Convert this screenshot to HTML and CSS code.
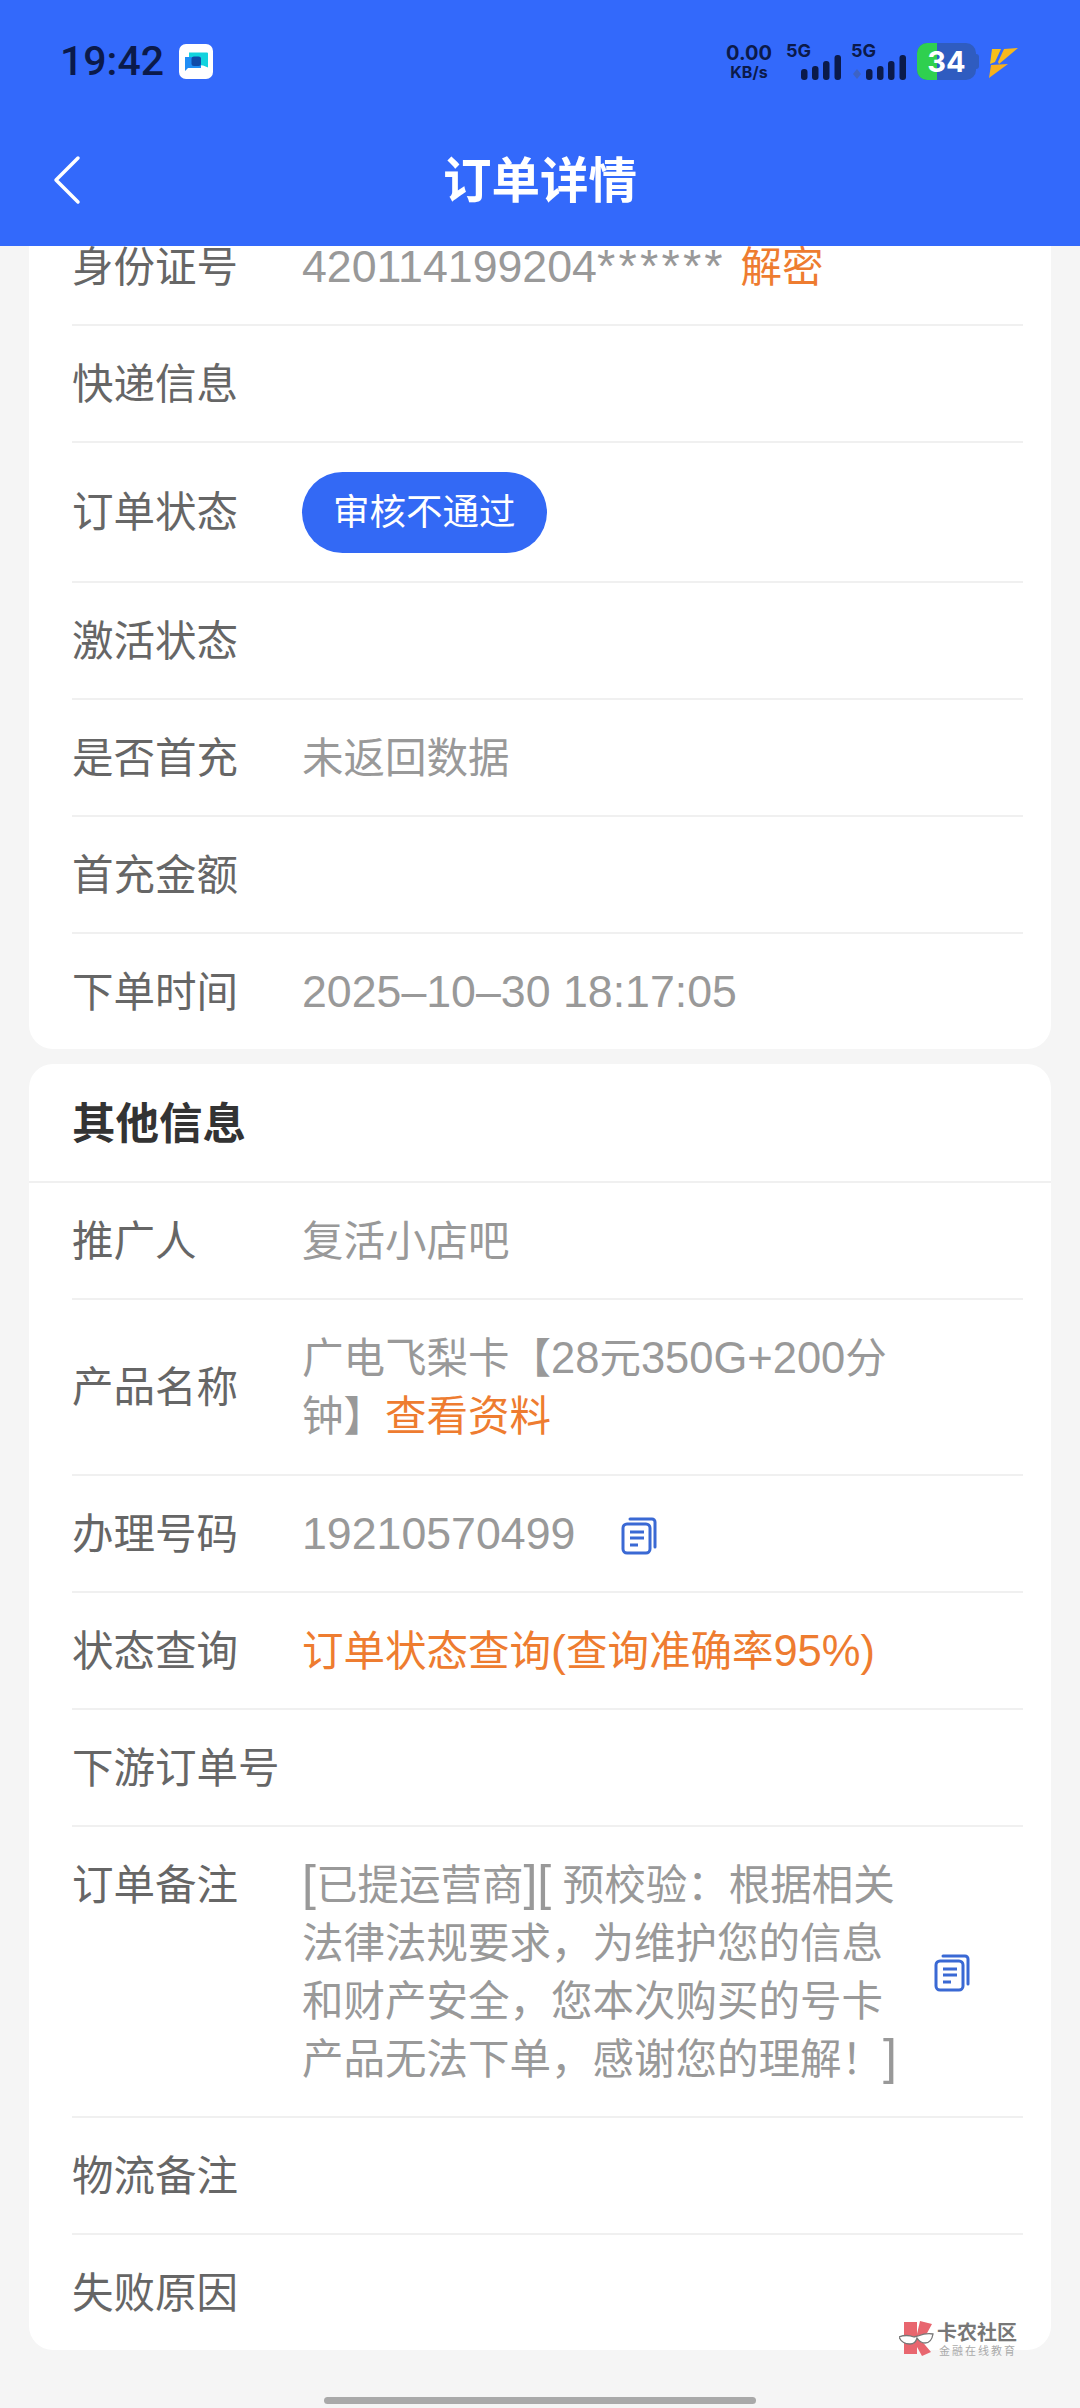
FILE: index.html
```html
<!DOCTYPE html>
<html lang="zh-CN">
<head>
<meta charset="utf-8">
<title>订单详情</title>
<link rel="stylesheet" href="styles.css">
</head>
<body>
<div class="screen">
  <header class="appbar">
    <div class="status">
      <div class="status-left">
        <span class="time">19:42</span>
        <svg class="app-icon" width="34" height="35" viewBox="0 0 34 35">
          <rect width="34" height="35" rx="7" fill="#fff"/>
          <path d="M10 8.500h18a1 1 0 0 1 1 1v14c-5-3-10-3-19-2z" fill="#12d3de"/>
          <path d="M6 13h15a1 1 0 0 1 1 1v10H9l-3 3z" fill="#1f8ef5"/>
          <rect x="12.500" y="12.500" width="9.500" height="9.500" rx="2.500" fill="#0f4aa8"/>
        </svg>
      </div>
      <div class="status-right">
        <div class="speed"><span class="speed-num">0.00</span><span class="speed-unit">KB/s</span></div>
        <div class="sig">
          <span class="sig-label">5G</span>
          <svg class="sig-bars" width="41" height="25" viewBox="0 0 41 25">
            <rect x="0" y="14" width="6.500" height="11" rx="3" fill="#0b1a4a"/>
            <rect x="11" y="11" width="6.500" height="14" rx="3" fill="#0b1a4a"/>
            <rect x="22" y="6" width="6.500" height="19" rx="3" fill="#0b1a4a"/>
            <rect x="33.500" y="0" width="6.500" height="25" rx="3" fill="#0b1a4a"/>
          </svg>
        </div>
        <div class="sig sig-second">
          <span class="sig-label">5G</span>
          <svg class="sig-bars" width="41" height="25" viewBox="0 0 41 25">
            <path class="sim-mark" d="M-9 14l-4 5 4 5 4-5z" fill="#3d63c4"/>
            <rect x="0" y="14" width="6.500" height="11" rx="3" fill="#0b1a4a"/>
            <rect x="11" y="11" width="6.500" height="14" rx="3" fill="#0b1a4a"/>
            <rect x="22" y="6" width="6.500" height="19" rx="3" fill="#0b1a4a"/>
            <rect x="33.500" y="0" width="6.500" height="25" rx="3" fill="#0b1a4a"/>
          </svg>
        </div>
        <div class="battery"><div class="battery-fill"></div><span class="battery-num">34</span></div>
        <div class="battery-cap"></div>
        <svg class="bolt" width="31" height="32" viewBox="0 0 31 32">
          <path d="M3 2h9L6 15l-5 2z" fill="#f7c01c"/>
          <path d="M15 2l14-1L10 17l-1-2z" fill="#f7b81c"/>
          <path d="M2 18l17-1L0 31z" fill="#f7b01c"/>
        </svg>
      </div>
    </div>
    <div class="navbar">
      <svg class="back" width="28" height="50" viewBox="0 0 28 50">
        <path d="M25 3L3 25l22 22" fill="none" stroke="#fff" stroke-width="3.500" stroke-linecap="round" stroke-linejoin="round"/>
      </svg>
      <h1 class="title">订单详情</h1>
    </div>
  </header>

  <main class="content">
    <section class="card card-first">
      <div class="row"><span class="label">身份证号</span><span class="value"><span class="num">420114199204</span><span class="stars">******</span> <span class="link">解密</span></span></div>
      <div class="row"><span class="label">快递信息</span></div>
      <div class="row row-pill"><span class="label">订单状态</span><span class="pill">审核不通过</span></div>
      <div class="row"><span class="label">激活状态</span></div>
      <div class="row"><span class="label">是否首充</span><span class="value">未返回数据</span></div>
      <div class="row"><span class="label">首充金额</span></div>
      <div class="row row-last"><span class="label">下单时间</span><span class="value"><span class="num">2025–10–30 18:17:05</span></span></div>
    </section>

    <section class="card">
      <h2 class="card-title">其他信息</h2>
      <div class="row"><span class="label">推广人</span><span class="value">复活小店吧</span></div>
      <div class="row row-center"><span class="label">产品名称</span><span class="value value-wrap">广电飞梨卡【<span class="num-sm">28</span>元<span class="num-sm">350G+200</span>分钟】<span class="link">查看资料</span></span></div>
      <div class="row">
        <span class="label">办理号码</span><span class="value"><span class="num">19210570499</span></span>
        <svg class="copy copy-inline" width="36" height="38" viewBox="0 0 36 38">
          <path d="M9 2h22a3 3 0 0 1 3 3v25" fill="none" stroke="#3a69d4" stroke-width="3" stroke-linecap="round"/>
          <rect x="2" y="7" width="27" height="29" rx="4" fill="none" stroke="#3a69d4" stroke-width="3"/>
          <path d="M9 15h14M9 21h14M9 28h8" fill="none" stroke="#3a69d4" stroke-width="3"/>
        </svg>
      </div>
      <div class="row"><span class="label">状态查询</span><span class="value link">订单状态查询<span class="num">(</span>查询准确率<span class="num-sm">95%)</span></span></div>
      <div class="row"><span class="label">下游订单号</span></div>
      <div class="row">
        <span class="label">订单备注</span>
        <span class="value value-note"><span class="br">[</span>已提运营商<span class="br">][</span> 预校验：根据相关法律法规要求，为维护您的信息和财产安全，您本次购买的号卡产品无法下单，感谢您的理解！<span class="br">]</span></span>
        <svg class="copy copy-note" width="36" height="38" viewBox="0 0 36 38">
          <path d="M9 2h22a3 3 0 0 1 3 3v25" fill="none" stroke="#3a69d4" stroke-width="3" stroke-linecap="round"/>
          <rect x="2" y="7" width="27" height="29" rx="4" fill="none" stroke="#3a69d4" stroke-width="3"/>
          <path d="M9 15h14M9 21h14M9 28h8" fill="none" stroke="#3a69d4" stroke-width="3"/>
        </svg>
      </div>
      <div class="row"><span class="label">物流备注</span></div>
      <div class="row row-last"><span class="label">失败原因</span></div>
    </section>
  </main>

  <div class="watermark">
    <svg class="wm-logo" width="36" height="36" viewBox="0 0 36 36">
      <path d="M5 1h13v12L21 0l12 3-6 11-6 4 11 13-9 4-5-9v7H5z" fill="#e8666f"/>
      <path d="M0 16c5-2 10-2 15 0l4-1c5-2 10-3 15-2-1 6-3 9-8 9-4 0-6-2-8-5-1 4-3 6-7 6-5 0-9-2-11-7z" fill="#fff" stroke="#777" stroke-width="1.300"/>
    </svg>
    <div class="wm-text"><span class="wm-main">卡农社区</span><span class="wm-sub">金融在线教育</span></div>
  </div>
  <div class="home-bar"></div>
</div>
</body>
</html>
```

FILE: styles.css
```css
* { box-sizing: border-box; }
html, body { margin: 0; padding: 0; }
body {
  width: 1080px;
  height: 2408px;
  overflow: hidden;
  background: #f5f5f5;
  font-family: "Liberation Sans", "Noto Sans CJK SC", sans-serif;
}
.screen {
  position: relative;
  width: 1080px;
  height: 2408px;
  overflow: hidden;
  display: flex;
  flex-direction: column;
}
.appbar {
  height: 246px;
  flex: none;
  background: #3369fb;
  position: relative;
  z-index: 2;
}
.status {
  height: 124px;
  display: flex;
  justify-content: space-between;
  align-items: flex-start;
  padding: 43px 60px 0 60px;
}
.status-left { display: flex; align-items: center; gap: 15px; }
.time {
  font-family: "Roboto", sans-serif;
  font-weight: 500;
  font-size: 41px;
  line-height: 37px;
  color: #0b1a4a;
}
.app-icon { display: block; }
.status-right { display: flex; align-items: flex-start; }
.speed {
  width: 52px;
  margin-right: 5px;
  display: flex;
  flex-direction: column;
  align-items: center;
  color: #0b1a4a;
  font-family: "Inter", sans-serif;
  font-weight: 700;
}
.speed-num { font-size: 20px; line-height: 21px; }
.speed-unit { font-size: 16px; line-height: 17px; }
.sig {
  width: 65px;
  height: 37px;
  display: flex;
  flex-direction: column;
  align-items: flex-start;
  padding-left: 6px;
}
.sig-second { margin-right: 8px; }
.sig-label {
  font-family: "Inter", sans-serif;
  font-weight: 700;
  font-size: 18px;
  line-height: 16px;
  color: #0b1a4a;
}
.sig-bars { margin: -4px 0 0 15px; display: block; overflow: visible; }
.battery {
  width: 59px;
  height: 37px;
  margin-left: -1px;
  border-radius: 10px;
  background: #2f5cc0;
  overflow: hidden;
  display: flex;
  align-items: center;
  justify-content: center;
  position: relative;
}
.battery-fill {
  position: absolute;
  left: 0; top: 0; bottom: 0;
  width: 20px;
  background: #2fd04f;
}
.battery-num {
  position: relative;
  color: #fff;
  font-family: "Inter", sans-serif;
  font-weight: 700;
  font-size: 29px;
  line-height: 37px;
}
.battery-cap {
  width: 3px;
  height: 15px;
  margin-top: 11px;
  border-radius: 0 3px 3px 0;
  background: #2f5cc0;
}
.bolt { margin: 4px 0 0 10px; display: block; }
.navbar {
  height: 122px;
  position: relative;
  display: flex;
  align-items: center;
  justify-content: center;
}
.back { position: absolute; left: 53px; top: 31px; }
.title {
  margin: 0;
  color: #fff;
  font-size: 48.500px;
  line-height: 60px;
  font-weight: 700;
  font-family: "Noto Sans CJK SC", sans-serif;
  position: relative;
  top: -8px;
}
.content {
  flex: 1;
  min-height: 0;
  padding: 0 29px;
  display: flex;
  flex-direction: column;
  gap: 15px;
}
.card {
  background: #fff;
  border-radius: 24px;
  flex: none;
}
.card-first { margin-top: -37px; }
.card-title {
  margin: 0;
  height: 119px;
  padding: 0 0 5px 43px;
  display: flex;
  align-items: center;
  font-size: 43.500px;
  font-weight: 700;
  color: #333;
  border-bottom: 2px solid #f0f0f0;
  font-family: "Noto Sans CJK SC", sans-serif;
}
.row {
  margin: 0 28px 0 43px;
  padding: 30px 0 27px;
  display: flex;
  align-items: flex-start;
  border-bottom: 2px solid #f0f0f0;
  min-height: 117px;
  font-size: 41.500px;
  line-height: 58px;
}
.row-last { border-bottom: 0; min-height: 115px; }
.row-center { align-items: center; padding-bottom: 28px; }
.row-pill { padding: 29px 0 28px; align-items: center; }
.label { width: 230px; flex: none; color: #666; }
.value { color: #999; }
.num { font-size: 44.700px; line-height: 0; }
.num-sm { font-size: 43.500px; line-height: 0; }
.stars { font-size: 47px; letter-spacing: 3.200px; line-height: 0; margin-right: 3px; }
.br { font-size: 50px; line-height: 0; font-weight: 400; }
.link { color: #ee7c30; }
.pill {
  height: 81px;
  padding: 0 31px;
  border-radius: 41px;
  background: #3369f5;
  color: #fff;
  font-size: 36.500px;
  line-height: 81px;
}
.value-wrap { width: 610px; }
.value-note { width: 600px; }
.copy { display: block; flex: none; }
.copy-inline { margin: 11px 0 0 46px; }
.copy-note { margin-left: 32px; align-self: center; }
.watermark {
  position: absolute;
  left: 899px;
  top: 2321px;
  display: flex;
  gap: 2px;
  align-items: center;
}
.wm-text { display: flex; flex-direction: column; }
.wm-main { font-size: 20px; line-height: 22px; font-weight: 700; color: #777; font-family: "Noto Sans CJK SC", sans-serif; }
.wm-sub { font-size: 11px; line-height: 14px; letter-spacing: 2px; color: #aaa; font-family: "Noto Sans CJK SC", sans-serif; padding-left: 2px; }
.home-bar {
  position: absolute;
  left: 324px;
  top: 2397px;
  width: 432px;
  height: 7px;
  border-radius: 4px;
  background: #a9a9a9;
}
```
